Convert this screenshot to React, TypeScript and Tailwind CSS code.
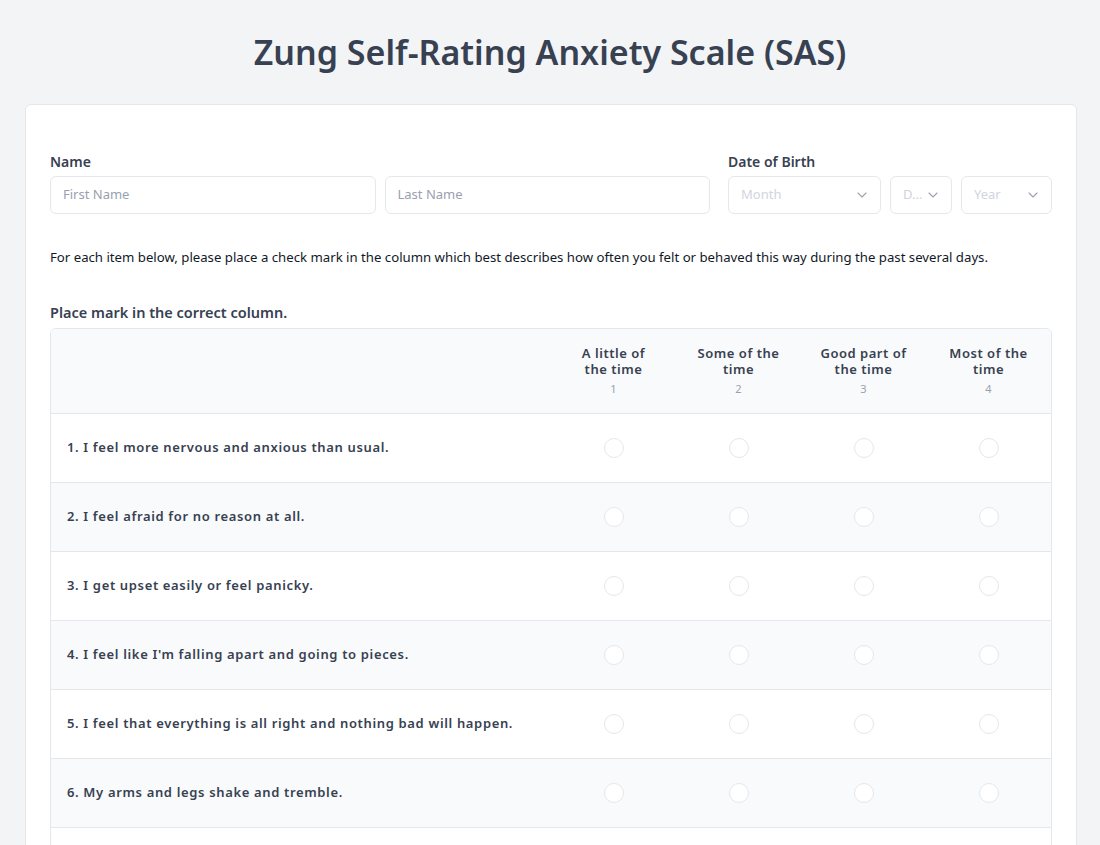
import React from "react";

const questions = [
  "1. I feel more nervous and anxious than usual.",
  "2. I feel afraid for no reason at all.",
  "3. I get upset easily or feel panicky.",
  "4. I feel like I'm falling apart and going to pieces.",
  "5. I feel that everything is all right and nothing bad will happen.",
  "6. My arms and legs shake and tremble.",
  "7. I am bothered by headaches, neck and back pains.",
  "8. I feel weak and get tired easily.",
];

const cols = [
  ["A little of", "the time", "1"],
  ["Some of the", "time", "2"],
  ["Good part of", "the time", "3"],
  ["Most of the", "time", "4"],
];

function Chevron() {
  return (
    <svg width="12" height="12" viewBox="0 0 12 12" fill="none" className="shrink-0">
      <path d="M2 4l4 4 4-4" stroke="#9ca3af" strokeWidth="1.1" strokeLinecap="round" strokeLinejoin="round" />
    </svg>
  );
}

function Select({ label, w }: { label: string; w: string }) {
  return (
    <div className={`${w} h-[38px] rounded-md border border-gray-200 bg-white flex items-center justify-between pl-3 pr-3 text-[13px] text-gray-300`}>
      <span className="truncate">{label}</span>
      <Chevron />
    </div>
  );
}

export default function App() {
  return (
    <div className="min-h-screen bg-[#f3f4f6] pb-10" style={{ fontFamily: '"Noto Sans", "Open Sans", sans-serif' }}>
      <h1 className="pt-[26px] pb-[26px] text-center text-[34px] leading-[52px] font-semibold text-[#374151]">
        Zung Self-Rating Anxiety Scale (SAS)
      </h1>
      <div className="ml-[25px] mr-[23px] rounded-md border border-gray-200 bg-white pl-[24px] pr-[24px] pt-[47px] pb-8">
        <div className="flex gap-[18px]">
          <div className="w-[661px]">
            <div className="text-[14px] font-semibold text-[#374151] leading-[20px] mb-[4px]">Name</div>
            <div className="flex gap-[9px]">
              <div className="flex-1 h-[38px] rounded-md border border-gray-200 flex items-center px-3 text-[13px] text-gray-400">First Name</div>
              <div className="flex-1 h-[38px] rounded-md border border-gray-200 flex items-center px-3 text-[13px] text-gray-400">Last Name</div>
            </div>
          </div>
          <div className="w-[324px]">
            <div className="text-[14px] font-semibold text-[#374151] leading-[20px] mb-[4px]">Date of Birth</div>
            <div className="flex gap-[9px]">
              <Select label="Month" w="w-[153px]" />
              <Select label="D..." w="w-[62px]" />
              <Select label="Year" w="w-[91px]" />
            </div>
          </div>
        </div>
        <p className="mt-[33px] text-[13.2px] leading-[20px] text-[#111827]">
          For each item below, please place a check mark in the column which best describes how often you felt or behaved this way during the past several days.
        </p>
        <div className="mt-[35px] text-[14.5px] font-semibold text-[#374151] leading-[20px] mb-[6px]">Place mark in the correct column.</div>
        <div className="rounded-md border border-gray-200 overflow-hidden">
          <div className="flex bg-[#f9fafb] h-[85px] border-b border-gray-200 items-center">
            <div className="w-[500px]"></div>
            {cols.map((c) => (
              <div key={c[2]} className="w-[125px] flex flex-col items-center text-center">
                <div className="text-[13px] font-semibold text-[#374151] leading-[16px] tracking-[0.04em]">{c[0]}</div>
                <div className="text-[13px] font-semibold text-[#374151] leading-[16px] tracking-[0.04em]">{c[1]}</div>
                <div className="text-[11px] text-gray-400 leading-[16px] mt-[4px]">{c[2]}</div>
              </div>
            ))}
          </div>
          {questions.map((q, i) => (
            <div key={i} className={`flex h-[69px] items-center border-b border-gray-200 ${i % 2 === 1 ? "bg-[#f9fafb]" : "bg-white"}`}>
              <div className="w-[500px] pl-4 text-[13px] font-semibold text-[#374151] tracking-wider">{q}</div>
              {cols.map((c) => (
                <div key={c[2]} className="w-[125px] flex justify-center">
                  <div className="w-[20px] h-[20px] rounded-full border border-gray-200 bg-white"></div>
                </div>
              ))}
            </div>
          ))}
        </div>
      </div>
    </div>
  );
}
